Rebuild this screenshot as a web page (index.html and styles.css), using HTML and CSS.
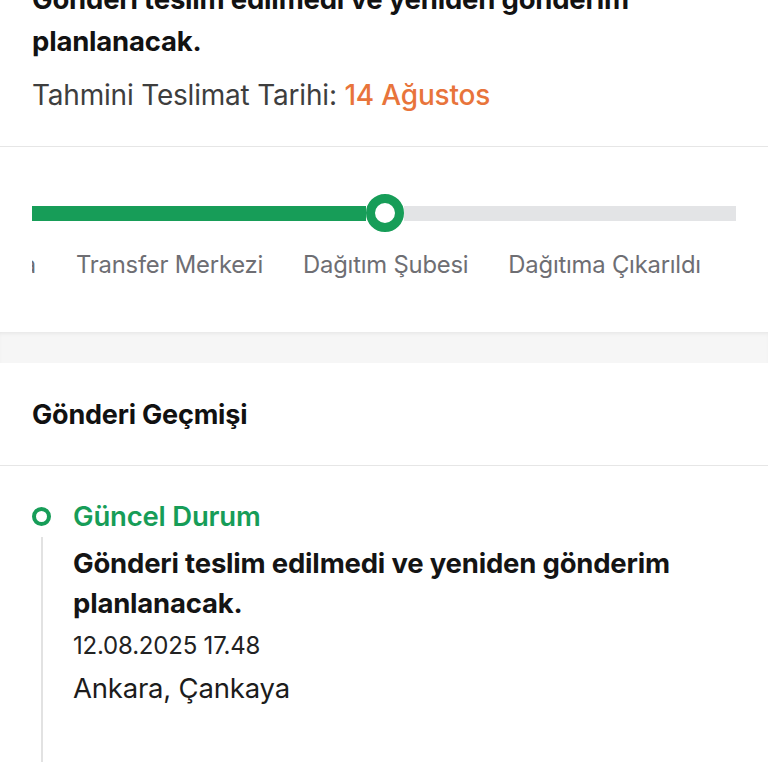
FILE: index.html
```html
<!DOCTYPE html>
<html lang="tr">
<head>
<meta charset="utf-8">
<title>Gönderi Takip</title>
<link rel="stylesheet" href="styles.css">
</head>
<body>
  <section class="summary">
    <p class="summary-title">Gönderi teslim edilmedi ve yeniden gönderim planlanacak.</p>
    <p class="eta">Tahmini Teslimat Tarihi: <span class="eta-date">14 Ağustos</span></p>
  </section>

  <section class="progress">
    <div class="progress-inner">
      <div class="bar">
        <div class="bar-fill"></div>
        <div class="bar-knob"></div>
        <div class="bar-rest"></div>
      </div>
      <div class="steps">
        <div class="step step-clipped"><span>Çıkış Aktarma</span></div>
        <div class="step">Transfer Merkezi</div>
        <div class="step">Dağıtım Şubesi</div>
        <div class="step">Dağıtıma Çıkarıldı</div>
      </div>
    </div>
  </section>

  <div class="band"></div>

  <section class="history">
    <h2 class="history-title">Gönderi Geçmişi</h2>
    <div class="event">
      <span class="event-dot"></span>
      <div class="event-status">Güncel Durum</div>
      <span class="event-line"></span>
      <div class="event-body">
        <p class="event-text">Gönderi teslim edilmedi ve yeniden gönderim planlanacak.</p>
        <p class="event-date">12.08.2025 17.48</p>
        <p class="event-place">Ankara, Çankaya</p>
      </div>
    </div>
  </section>
</body>
</html>
```

FILE: styles.css
```css
* { box-sizing: border-box; }

html, body {
  margin: 0;
  padding: 0;
  background: #ffffff;
}

body {
  font-family: Inter, "Noto Sans", "Liberation Sans", sans-serif;
  color: #141414;
  overflow: hidden;
}

p { margin: 0; }

.summary {
  margin-top: -22px;
  padding: 0 32px 34px;
}

.summary-title {
  font-size: 27.5px;
  font-weight: 700;
  line-height: 42px;
  color: #121212;
  letter-spacing: -0.2px;
}

.eta {
  margin-top: 16px;
  font-size: 28px;
  line-height: 34px;
  color: #3e3e3e;
  letter-spacing: -0.2px;
}

.eta-date {
  color: #e8743b;
  font-weight: 500;
}

.progress {
  border-top: 1px solid #e6e6e6;
  padding: 47px 32px 52px;
}

.progress-inner {
  overflow: hidden;
}

.bar {
  display: flex;
  align-items: center;
  height: 38px;
}

.bar-fill {
  width: 334px;
  height: 15px;
  background: #179d58;
}

.bar-knob {
  flex: 0 0 38px;
  height: 38px;
  border-radius: 50%;
  border: 9px solid #179d58;
  background: #ffffff;
}

.bar-rest {
  flex: 1;
  height: 15px;
  background: #e3e4e6;
}

.steps {
  display: flex;
  gap: 40px;
  margin-top: 18px;
  white-space: nowrap;
}

.step {
  flex: 0 0 auto;
  font-size: 23.8px;
  line-height: 30px;
  color: #6e6e73;
  letter-spacing: -0.2px;
}

.step-clipped {
  flex: 0 0 4px;
  display: flex;
  justify-content: flex-end;
  overflow: hidden;
}

.band {
  height: 31px;
  background: #f6f6f6;
  box-shadow: inset 0 3px 4px -2px rgba(0, 0, 0, 0.08);
}

.history {
  background: #ffffff;
}

.history-title {
  margin: 0;
  height: 103px;
  display: flex;
  align-items: center;
  padding: 0 32px;
  font-size: 27px;
  font-weight: 700;
  color: #111111;
  border-bottom: 1px solid #e6e6e6;
  letter-spacing: -0.2px;
}

.event {
  display: grid;
  grid-template-columns: 19px 1fr;
  column-gap: 22px;
  padding: 33px 32px 0;
}

.event-dot {
  align-self: center;
  width: 19px;
  height: 19px;
  border-radius: 50%;
  border: 4.5px solid #179d58;
  background: #ffffff;
}

.event-status {
  font-size: 27.5px;
  line-height: 34px;
  font-weight: 600;
  color: #179d58;
  letter-spacing: -0.2px;
}

.event-line {
  justify-self: center;
  width: 2px;
  margin-top: 4px;
  background: #e2e2e2;
}

.event-body {
  padding: 10px 0 57px;
}

.event-text {
  font-size: 27.5px;
  line-height: 40px;
  font-weight: 700;
  color: #141414;
  letter-spacing: -0.2px;
}

.event-date {
  margin-top: 8px;
  font-size: 24px;
  line-height: 30px;
  color: #222222;
  letter-spacing: -0.2px;
}

.event-place {
  margin-top: 10px;
  font-size: 27.5px;
  line-height: 34px;
  color: #1c1c1c;
  letter-spacing: -0.2px;
}
```
